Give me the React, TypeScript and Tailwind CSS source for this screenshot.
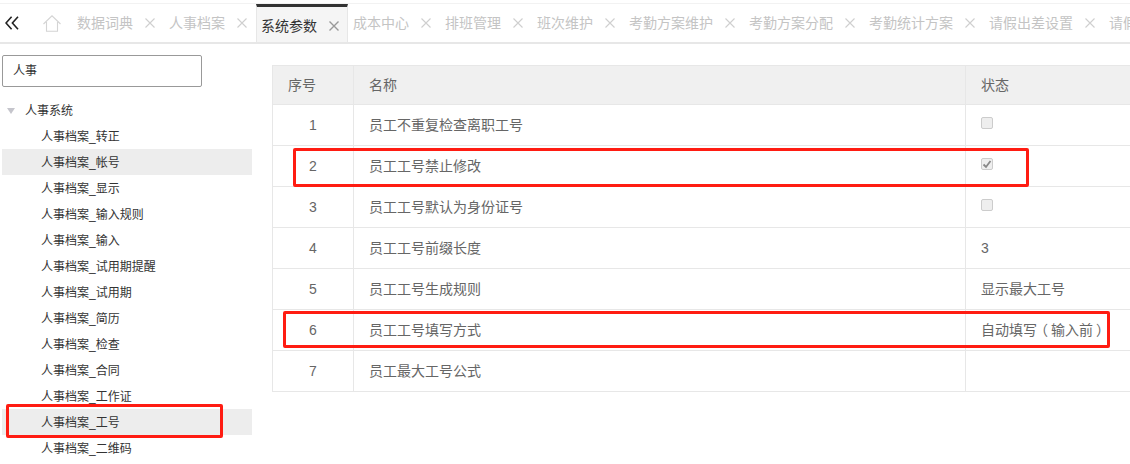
import React from "react";

const tabs = ["成本中心", "排班管理", "班次维护", "考勤方案维护", "考勤方案分配", "考勤统计方案", "请假出差设置", "请假出差"];
const tree = ["转正", "帐号", "显示", "输入规则", "输入", "试用期提醒", "试用期", "简历", "检查", "合同", "工作证", "工号", "二维码"];
const rows: [string, string, React.ReactNode][] = [
  ["1", "员工不重复检查离职工号", <Check />],
  ["2", "员工工号禁止修改", <Check on />],
  ["3", "员工工号默认为身份证号", <Check />],
  ["4", "员工工号前缀长度", "3"],
  ["5", "员工工号生成规则", "显示最大工号"],
  [
    "6",
    "员工工号填写方式",
    <span>
      自动填写<span className="inline-block ml-[4px] mr-[3px] [font-feature-settings:'halt']">（</span>输入前<span className="inline-block ml-[3px] mr-[4px] [font-feature-settings:'halt']">）</span>
    </span>,
  ],
  ["7", "员工最大工号公式", ""],
];

function Check({ on }: { on?: boolean }) {
  return (
    <span className="flex h-3 w-3 items-center justify-center rounded-[2px] border border-[#cccccc] bg-[#eeeeee] mb-[4px]">
      {on && (
        <svg width="10" height="10" viewBox="0 0 10 10">
          <path d="M1.5 5.5 L4 8 L8.5 2" fill="none" stroke="#888888" strokeWidth="1.8" />
        </svg>
      )}
    </span>
  );
}

function X({ dark }: { dark?: boolean }) {
  return (
    <svg width="10" height="10" viewBox="0 0 10 10" className="shrink-0">
      <path d="M0.5 0.5 L9.5 9.5 M9.5 0.5 L0.5 9.5" stroke={dark ? "#999999" : "#cfcfcf"} strokeWidth={dark ? 1.4 : 1.1} />
    </svg>
  );
}

function Tab({ label }: { label: string }) {
  return (
    <div className="flex shrink-0 items-center h-full pl-[4px] pr-[3px]">
      <span className="text-[14px] leading-none text-[#c4c4c4] whitespace-nowrap">{label}</span>
      <span className="ml-[12px] mr-[7px]"><X /></span>
    </div>
  );
}

function Box({ className }: { className: string }) {
  return <div className={`absolute rounded-[2px] border-[3px] border-[#ff1c12] ${className}`} />;
}

export default function App() {
  return (
    <div className="relative h-[464px] w-[1130px] overflow-hidden bg-white" style={{ fontFamily: '"Liberation Sans", "Noto Sans CJK SC", sans-serif' }}>
      <div className="mt-[3px] h-[41px] border-t border-b-2 border-t-[#f2f2f2] border-b-[#e7e7e7] flex items-stretch overflow-hidden">
        <div className="w-[43px] shrink-0 flex items-center pl-[5px]">
          <svg width="14" height="14" viewBox="0 0 14 14">
            <path d="M6.6 0.8 L1 7 L6.6 13.2 M13 0.8 L7.4 7 L13 13.2" fill="none" stroke="#222222" strokeWidth="1.6" />
          </svg>
        </div>
        <div className="w-[34px] shrink-0 flex items-center">
          <svg width="18" height="17" viewBox="0 0 18 17">
            <path d="M0.5 9 L9 0.8 L17.5 9 M3.5 7 V16.3 H14.5 V7" fill="none" stroke="#d4d4d4" strokeWidth="1.1" />
          </svg>
        </div>
        <div className="flex shrink-0 items-center pl-0 w-[92px]">
          <span className="text-[14px] leading-none text-[#c4c4c4]">数据词典</span>
          <span className="ml-[12px]"><X /></span>
        </div>
        <div className="flex shrink-0 items-center w-[87px]">
          <span className="text-[14px] leading-none text-[#c4c4c4]">人事档案</span>
          <span className="ml-[12px]"><X /></span>
        </div>
        <div className="flex shrink-0 w-[92px] h-[41px] items-center border-t-[3px] border-x border-t-[#333333] border-x-[#e7e7e7] bg-[#f5f5f5] pl-[4px]">
          <span className="text-[14px] leading-none text-[#333333]">系统参数</span>
          <span className="ml-[12px]"><X dark /></span>
        </div>
        <div className="flex items-center gap-0 pl-[1px]">
          {tabs.map((t) => <Tab key={t} label={t} />)}
        </div>
      </div>

      <div className="flex">
        <aside className="w-[272px] shrink-0 pt-[11px]">
          <div className="ml-[2px] h-[32px] w-[200px] rounded-[2px] border border-[#999999] pl-[10px] text-[12px] leading-[31px] text-[#333333]">人事</div>
          <div className="mt-[10px] flex h-[26px] items-center pl-[7px] pt-[2px]">
            <span className="h-0 w-0 border-x-[4px] border-t-[6px] border-x-transparent border-t-[#c5c5cc]" />
            <span className="ml-[10px] text-[12px] text-[#333333]">人事系统</span>
          </div>
          {tree.map((t) => (
            <div key={t} className={`ml-[2px] h-[26px] w-[250px] pl-[39px] text-[12px] leading-[28px] text-[#333333] ${t === "帐号" || t === "工号" ? "bg-[#ededed]" : ""}`}>
              人事档案_{t}
            </div>
          ))}
        </aside>
        <main className="pt-[21px] flex-1 min-w-0">
          <div className="border-l border-t border-[#e7e7e7] text-[14px] text-[#666666]">
            <div className="flex h-[39px] bg-[#f0f0f0] border-b border-[#e7e7e7]">
              <div className="w-[81px] border-r border-[#e7e7e7] flex items-center pl-[15px]">序号</div>
              <div className="w-[612px] border-r border-[#e7e7e7] flex items-center pl-[15px]">名称</div>
              <div className="flex-1 flex items-center pl-[15px]">状态</div>
            </div>
            {rows.map(([n, name, state]) => (
              <div key={n} className="flex h-[41px] border-b border-[#e7e7e7]">
                <div className="w-[81px] border-r border-[#e7e7e7] flex items-center justify-center">{n}</div>
                <div className="w-[612px] border-r border-[#e7e7e7] flex items-center pl-[15px]">{name}</div>
                <div className="flex-1 flex items-center pl-[15px] whitespace-nowrap">{state}</div>
              </div>
            ))}
          </div>
        </main>
      </div>

      <Box className="left-[293px] top-[148px] h-[39px] w-[736px]" />
      <Box className="left-[283px] top-[311px] h-[37px] w-[827px]" />
      <Box className="left-[6px] top-[404px] h-[34px] w-[217px]" />
    </div>
  );
}
